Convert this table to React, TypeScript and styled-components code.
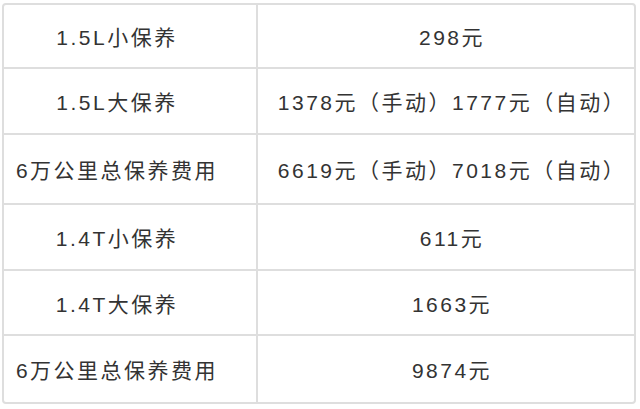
import React from 'react';
import styled, { createGlobalStyle } from 'styled-components';

const GlobalStyle = createGlobalStyle`
  html, body {
    margin: 0;
    padding: 0;
    background: #fff;
  }
  body {
    font-family: "Liberation Sans", "Noto Sans CJK SC", sans-serif;
    color: #333;
  }
`;

const Page = styled.div`
  padding: 3px 4px 5px 2px;
`;

const Table = styled.div`
  display: grid;
  grid-template-columns: 254px 1fr;
  grid-template-rows: 64px 66px 70px 66px 65px 66px;
  height: 401px;
  box-sizing: border-box;
  border: 2px solid #dedede;
  border-radius: 4px;
  overflow: hidden;
`;

const Cell = styled.div<{ $side: 'left' | 'right'; $last?: boolean }>`
  display: flex;
  align-items: center;
  justify-content: center;
  box-sizing: border-box;
  border-bottom: ${({ $last }) => ($last ? 'none' : '2px solid #dedede')};
  border-right: ${({ $side }) => ($side === 'left' ? '2px solid #dedede' : 'none')};
  padding: ${({ $side }) => ($side === 'left' ? '0 26px 0 0' : '0 0 0 12px')};
  font-size: 21px;
  letter-spacing: 2.5px;
  white-space: nowrap;
  color: #333;
`;

const rows = [
  ['1.5L小保养', '298元'],
  ['1.5L大保养', '1378元（手动）1777元（自动）'],
  ['6万公里总保养费用', '6619元（手动）7018元（自动）'],
  ['1.4T小保养', '611元'],
  ['1.4T大保养', '1663元'],
  ['6万公里总保养费用', '9874元'],
];

const App: React.FC = () => {
  return (
    <Page>
      <GlobalStyle />
      <Table>
        {rows.map(([name, price], i) => (
          <React.Fragment key={i}>
            <Cell $side="left" $last={i === rows.length - 1}>{name}</Cell>
            <Cell $side="right" $last={i === rows.length - 1}>{price}</Cell>
          </React.Fragment>
        ))}
      </Table>
    </Page>
  );
};

export default App;
